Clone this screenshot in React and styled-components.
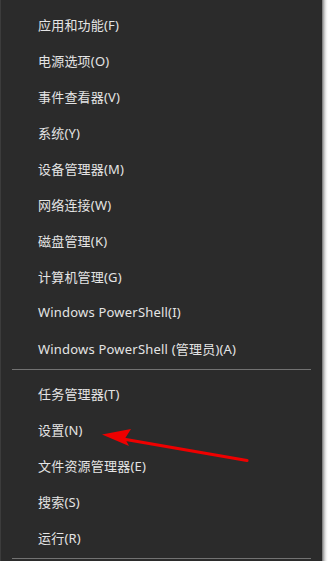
import React from "react";
import styled, { createGlobalStyle } from "styled-components";

const Global = createGlobalStyle`
  html, body { margin: 0; padding: 0; background: #ffffff; }
  body { width: 329px; height: 561px; overflow: hidden; }
`;

const Stage = styled.div`
  position: relative;
  width: 329px;
  height: 561px;
  display: flex;
  background: linear-gradient(to right, #2b2b2b 0, #2b2b2b 322px, #6e6e6e 322px, #9a9a9a 323px, #bdbdbd 324px, #d8d8d8 325px, #ececec 326px, #f8f8f8 327px, #ffffff 328px);
`;

const Menu = styled.ul`
  list-style: none;
  margin: 0;
  padding: 6px 0 0 0;
  width: 321px;
  height: 555px;
  background: #2b2b2b;
  border-left: 1px solid #3c3c3c;
  display: flex;
  flex-direction: column;
  font-family: "Segoe UI", "Noto Sans", "Noto Sans CJK SC", sans-serif;
`;

const Item = styled.li`
  height: 36px;
  display: flex;
  align-items: center;
  padding-left: 37px;
  color: #e4e4e4;
  font-size: 13px;
  letter-spacing: 0.2px;
  white-space: nowrap;
`;

const Separator = styled.li`
  height: 1px;
  margin: ${(p) => p.$margin};
  margin-left: 11px;
  width: 299px;
  background: #727272;
`;

const Arrow = styled.svg`
  position: absolute;
  left: 0;
  top: 0;
  width: 329px;
  height: 561px;
  pointer-events: none;
`;

const top = [
  "应用和功能(F)",
  "电源选项(O)",
  "事件查看器(V)",
  "系统(Y)",
  "设备管理器(M)",
  "网络连接(W)",
  "磁盘管理(K)",
  "计算机管理(G)",
  "Windows PowerShell(I)",
  "Windows PowerShell (管理员)(A)",
];
const bottom = ["任务管理器(T)", "设置(N)", "文件资源管理器(E)", "搜索(S)", "运行(R)"];

export default function App() {
  return (
    <>
      <Global />
      <Stage>
        <Menu>
          {top.map((t) => (
            <Item key={t}>{t}</Item>
          ))}
          <Separator $margin="3px 0 5px" />
          {bottom.map((t) => (
            <Item key={t}>{t}</Item>
          ))}
          <Separator $margin="3px 0 0" />
        </Menu>
        <Arrow viewBox="0 0 329 561">
          <line x1="123" y1="439" x2="247" y2="460.5" stroke="#ee0000" strokeWidth="3.2" strokeLinecap="round" />
          <polygon points="102,434.5 131,429 125,438.5 129,446" fill="#ee0000" />
        </Arrow>
      </Stage>
    </>
  );
}
